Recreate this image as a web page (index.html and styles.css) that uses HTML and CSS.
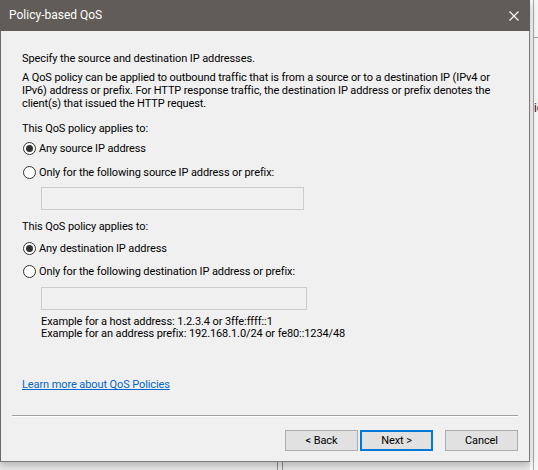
FILE: index.html
```html
<!DOCTYPE html>
<html lang="en">
<head>
  <meta charset="UTF-8" />
  <title>Policy-based QoS</title>
  <link rel="stylesheet" href="styles.css">
</head>
<body>
  <div class="desktop">
    <div class="back-window">
      <div class="back-rule"></div>
      <span class="back-text">io</span>
    </div>
    <div class="back-split"></div>

    <div class="dialog">
      <div class="titlebar">
        <span class="title">Policy-based QoS</span>
        <span class="close">
          <svg width="10" height="10" viewBox="0 0 10 10">
            <path d="M0.5 0.5 L9.5 9.5 M9.5 0.5 L0.5 9.5" stroke="#fff" stroke-width="1.1" fill="none"/>
          </svg>
        </span>
      </div>

      <div class="content">
        <p class="intro">Specify the source and destination IP addresses.</p>
        <p class="desc">A QoS policy can be applied to outbound traffic that is from a source or to a destination IP (IPv4 or IPv6) address or prefix. For HTTP response traffic, the destination IP address or prefix denotes the client(s) that issued the HTTP request.</p>

        <div class="group-label">This QoS policy applies to:</div>
        <label class="radio-row first"><span class="radio on"></span>Any source IP address</label>
        <label class="radio-row"><span class="radio"></span>Only for the following source IP address or prefix:</label>
        <div class="textbox src"></div>

        <div class="group-label second">This QoS policy applies to:</div>
        <label class="radio-row first"><span class="radio on"></span>Any destination IP address</label>
        <label class="radio-row tight"><span class="radio"></span>Only for the following destination IP address or prefix:</label>
        <div class="textbox dst"></div>

        <div class="examples">
          <div>Example for a host address: 1.2.3.4 or 3ffe:ffff::1</div>
          <div>Example for an address prefix: 192.168.1.0/24 or fe80::1234/48</div>
        </div>

        <a class="learn" href="#">Learn more about QoS Policies</a>
      </div>

      <div class="separator"></div>

      <div class="buttons">
        <button class="btn">&lt; Back</button>
        <button class="btn default">Next &gt;</button>
        <button class="btn cancel">Cancel</button>
      </div>
    </div>
  </div>
</body>
</html>
```

FILE: styles.css
```css
* {
  box-sizing: border-box;
}
body {
  margin: 0;
  font-family: Roboto, "Liberation Sans", sans-serif;
  font-size: 11px;
  letter-spacing: -0.1px;
  color: #000;
  background: #f0f0f0;
}

.desktop {
  position: relative;
  width: 538px;
  height: 470px;
  overflow: hidden;
  background: #e9e9e9;
}

/* window behind the dialog */
.back-window {
  position: absolute;
  left: 530px;
  top: 0;
  width: 40px;
  height: 470px;
  background: #f7f7f7;
  border-left: 2px solid #fbfbfb;
}
.back-window::before {
  content: "";
  position: absolute;
  left: 1px;
  top: 0;
  bottom: 0;
  width: 1px;
  background: #a9a9a9;
}
.back-rule {
  position: absolute;
  left: 2px;
  right: 0;
  top: 37px;
  height: 1px;
  background: #a0a0a0;
}
.back-text {
  position: absolute;
  left: 2px;
  top: 101px;
  font-size: 12px;
  color: #2a0f2f;
}
.back-split {
  position: absolute;
  left: 277px;
  top: 455px;
  width: 6px;
  height: 20px;
  border-left: 1px solid #8c8c8c;
  border-right: 1px solid #8c8c8c;
}

.dialog {
  position: absolute;
  left: 0;
  top: 0;
  width: 530px;
  height: 462px;
  background: #f0f0f0;
  border: 1px solid #6d6862;
  border-top: none;
  border-right-color: #7c7c7c;
  border-bottom-color: #7c7c7c;
  box-shadow: 0 3px 8px rgba(0,0,0,0.25);
}

.titlebar {
  height: 31px;
  margin: 0 -1px;
  background: #615c57;
  color: #fff;
  display: flex;
  align-items: center;
  justify-content: space-between;
}
.title {
  font-size: 12px;
  letter-spacing: 0;
  margin-left: 9px;
  margin-top: -1px;
}
.close {
  width: 46px;
  height: 31px;
  display: flex;
  align-items: center;
  justify-content: center;
  margin-right: -7px;
}

.content {
  padding: 0 0 0 21px;
  line-height: 13px;
}
.content p {
  margin: 0;
}
.intro {
  padding-top: 21px;
}
p.desc {
  margin-top: 6px;
  width: 480px;
}

.group-label {
  margin-top: 12px;
}
.group-label.second {
  margin-top: 10px;
}

.radio-row {
  display: flex;
  align-items: center;
  height: 16px;
  margin-top: 8px;
}
.radio-row.first {
  margin-top: 5px;
}
.group-label.second + .radio-row.first {
  margin-top: 7px;
}
.radio-row.tight {
  margin-top: 7px;
}
.radio {
  position: relative;
  width: 13px;
  height: 13px;
  margin: 0 3px 0 1px;
  border: 1px solid #333;
  border-radius: 50%;
  background: #fff;
}
.radio.on::after {
  content: "";
  position: absolute;
  left: 2px;
  top: 2px;
  width: 7px;
  height: 7px;
  border-radius: 50%;
  background: #333;
}

.textbox {
  margin: 7px 0 0 19px;
  height: 23px;
  border: 1px solid #cccccc;
  background: #f0f0f0;
}
.textbox.src {
  width: 263px;
}
.textbox.dst {
  width: 266px;
  margin-top: 8px;
}

.examples {
  margin: 6px 0 0 19px;
  line-height: 12px;
}

.learn {
  display: inline-block;
  margin-top: 38px;
  color: #0066cc;
  text-decoration: underline;
}

.separator {
  margin: 24px 11px 0 11px;
  height: 2px;
  border-top: 1px solid #a0a0a0;
  border-bottom: 1px solid #fff;
}

.buttons {
  display: flex;
  justify-content: flex-end;
  gap: 2px;
  margin-top: 13px;
  padding-right: 11px;
}
.btn {
  width: 73px;
  height: 21px;
  padding: 0;
  font-family: inherit;
  font-size: 11px;
  letter-spacing: -0.1px;
  color: #000;
  background: #e1e1e1;
  border: 1px solid #adadad;
}
.btn.default {
  border: 2px solid #0078d7;
}
.btn.cancel {
  margin-left: 10px;
}
```
